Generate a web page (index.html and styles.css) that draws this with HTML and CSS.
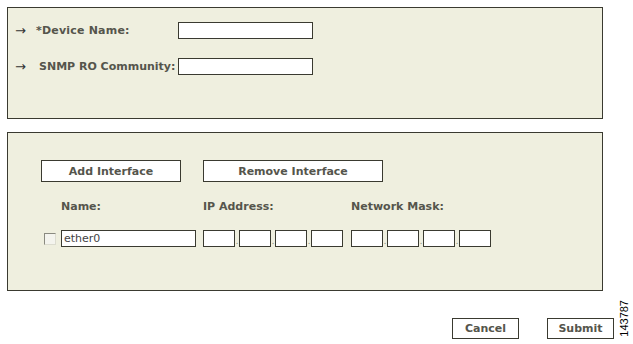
FILE: index.html
```html
<!DOCTYPE html>
<html lang="en">
<head>
    <meta charset="UTF-8">
    <title>Add Device</title>
    <link rel="stylesheet" href="styles.css">
</head>
<body>
    <div class="page">
        <div class="panel device">
            <div class="field-row">
                <span class="arrow">&rarr;</span>
                <label class="field-label" for="deviceName">*Device Name:</label>
                <input class="text-box" type="text" id="deviceName">
            </div>
            <div class="field-row">
                <span class="arrow">&rarr;</span>
                <label class="field-label indent" for="community">SNMP RO Community:</label>
                <input class="text-box" type="text" id="community">
            </div>
        </div>

        <div class="panel interfaces">
            <div class="button-row">
                <button class="button add">Add Interface</button>
                <button class="button remove">Remove Interface</button>
            </div>
            <div class="iface-grid">
                <span></span>
                <span class="col-label">Name:</span>
                <span class="col-label">IP Address:</span>
                <span class="col-label">Network Mask:</span>

                <input class="check" type="checkbox">
                <input class="text-box name" type="text" value="ether0">
                <div class="octets">
                    <input class="octet" type="text"><span class="dot">.</span>
                    <input class="octet" type="text"><span class="dot">.</span>
                    <input class="octet" type="text"><span class="dot">.</span>
                    <input class="octet" type="text">
                </div>
                <div class="octets">
                    <input class="octet" type="text"><span class="dot">.</span>
                    <input class="octet" type="text"><span class="dot">.</span>
                    <input class="octet" type="text"><span class="dot">.</span>
                    <input class="octet" type="text">
                </div>
            </div>
        </div>

        <div class="footer">
            <button class="button small">Cancel</button>
            <button class="button small">Submit</button>
            <span class="fig-id">143787</span>
        </div>
    </div>
</body>
</html>
```

FILE: styles.css
```css
body {
    margin: 0;
    background: #ffffff;
    font-family: "DejaVu Sans", Verdana, sans-serif;
    font-size: 11px;
    color: #55554c;
}
.page {
    padding: 7px 0 0 7px;
    width: 626px;
}
.panel {
    width: 596px;
    background: #efefdf;
    border: 1px solid #3a3a30;
}
.device {
    padding-top: 14px;
    box-sizing: border-box;
    height: 112px;
}
.field-row {
    display: flex;
    align-items: center;
    height: 17px;
    margin-bottom: 19px;
}
.arrow {
    width: 21px;
    padding-left: 7px;
    font-family: "DejaVu Sans", sans-serif;
    font-size: 13px;
    font-weight: normal;
    color: #333;
}
.field-label {
    width: 142px;
    font-weight: bold;
    letter-spacing: 0.2px;
}
.indent {
    padding-left: 3px;
    width: 139px;
    letter-spacing: 0;
}
.text-box {
    width: 135px;
    height: 17px;
    box-sizing: border-box;
    border: 1px solid #3a3a30;
    background: #fff;
    margin: 0;
    padding: 0 2px;
    font-family: "DejaVu Sans", Verdana, sans-serif;
    font-size: 11px;
    color: #444;
}
.interfaces {
    margin-top: 13px;
    height: 159px;
    box-sizing: border-box;
    padding-top: 27px;
}
.button-row {
    display: flex;
    gap: 22px;
    padding-left: 33px;
}
.button {
    height: 22px;
    border: 1px solid #3a3a30;
    background: #fff;
    font-family: "DejaVu Sans", Verdana, sans-serif;
    font-size: 11px;
    font-weight: bold;
    color: #55554c;
    padding: 0;
}
.add {
    width: 140px;
}
.remove {
    width: 180px;
}
.iface-grid {
    display: grid;
    grid-template-columns: 17px 142px 148px auto;
    grid-template-rows: 26px 17px;
    row-gap: 11px;
    padding-left: 36px;
    margin-top: 11px;
    align-items: center;
}
.col-label {
    font-weight: bold;
}
.check {
    appearance: none;
    width: 12px;
    height: 12px;
    margin: 0;
    border: 1px solid #dcdcd0;
    border-top-color: #8a8a80;
    border-left-color: #8a8a80;
    background: #f4f4ee;
}
.octets {
    display: flex;
    align-items: flex-end;
}
.octet {
    width: 32px;
    height: 17px;
    box-sizing: border-box;
    border: 1px solid #3a3a30;
    background: #fff;
    margin: 0;
    padding: 0;
}
.dot {
    width: 4px;
    text-align: center;
    font-size: 8px;
    line-height: 10px;
    color: #777;
}
.footer {
    display: flex;
    align-items: flex-start;
    margin-top: 27px;
    padding-left: 445px;
    height: 40px;
}
.small {
    width: 67px;
    height: 21px;
}
.small + .small {
    margin-left: 28px;
}
.fig-id {
    writing-mode: vertical-rl;
    transform: rotate(180deg);
    font-family: "Liberation Sans", Arial, sans-serif;
    font-size: 11px;
    color: #000;
    margin-left: 4px;
    margin-top: -18px;
}
```
